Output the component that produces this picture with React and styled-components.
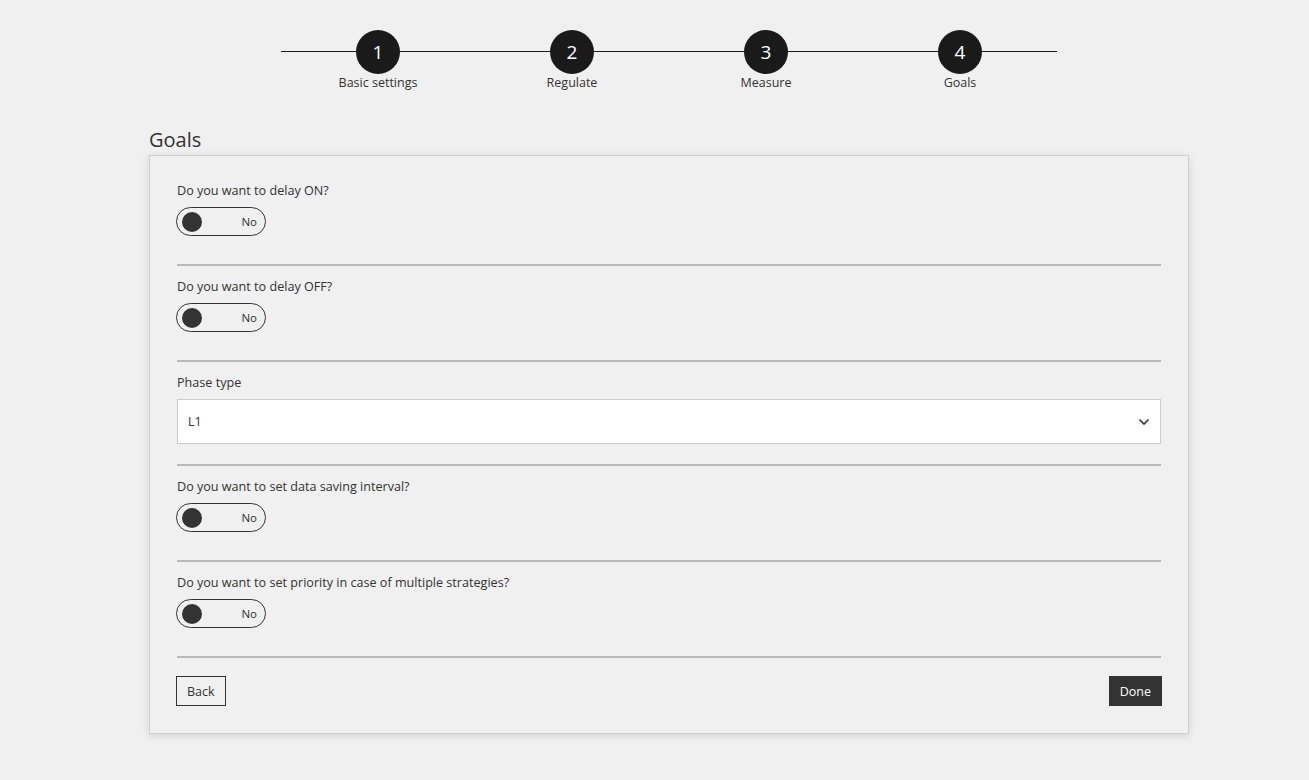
import React, { useState } from 'react';
import styled, { createGlobalStyle } from 'styled-components';

const GlobalStyle = createGlobalStyle`
  body {
    margin: 0;
    background: #f0f0f0;
    font-family: "Open Sans", "Noto Sans", sans-serif;
    color: #333;
  }
`;

const steps = ['Basic settings', 'Regulate', 'Measure', 'Goals'];

const questions = [
  { id: 'delayOn', label: 'Do you want to delay ON?' },
  { id: 'delayOff', label: 'Do you want to delay OFF?' },
  { id: 'phase', label: 'Phase type', select: true },
  { id: 'saving', label: 'Do you want to set data saving interval?' },
  { id: 'priority', label: 'Do you want to set priority in case of multiple strategies?' },
];

const Chevron = () => (
  <svg width="12" height="8" viewBox="0 0 12 8">
    <path d="M1.5 1.5 L6 6 L10.5 1.5" fill="none" stroke="#333" strokeWidth="1.6" />
  </svg>
);

const App = () => {
  const [values, setValues] = useState({});

  const flip = (id) => setValues((v) => ({ ...v, [id]: !v[id] }));

  return (
    <Page>
      <GlobalStyle />
      <Stepper>
        {steps.map((s, i) => (
          <Step key={s}>
            <Circle>{i + 1}</Circle>
            <StepLabel>{s}</StepLabel>
          </Step>
        ))}
      </Stepper>

      <Title>Goals</Title>
      <Card>
        {questions.map((q) => (
          <Section key={q.id} $select={q.select}>
            <Label>{q.label}</Label>
            {q.select ? (
              <Select>
                <span>L1</span>
                <Chevron />
              </Select>
            ) : (
              <Toggle onClick={() => flip(q.id)} $on={values[q.id]}>
                <Knob $on={values[q.id]} />
                <ToggleText>{values[q.id] ? 'Yes' : 'No'}</ToggleText>
              </Toggle>
            )}
          </Section>
        ))}
        <Footer>
          <BackButton>Back</BackButton>
          <DoneButton>Done</DoneButton>
        </Footer>
      </Card>
    </Page>
  );
};

const Page = styled.div`
  padding: 30px 0 40px;
  min-height: 100vh;
  box-sizing: border-box;
`;

const Stepper = styled.div`
  width: 776px;
  margin: 0 0 0 281px;
  display: grid;
  grid-template-columns: repeat(4, 1fr);
  position: relative;

  &::before {
    content: '';
    position: absolute;
    left: 0;
    right: 0;
    top: 21px;
    height: 1px;
    background: #1a1a1a;
  }
`;

const Step = styled.div`
  display: flex;
  flex-direction: column;
  align-items: center;
  position: relative;
`;

const Circle = styled.div`
  width: 44px;
  height: 44px;
  border-radius: 50%;
  background: #1a1a1a;
  color: #fff;
  font-size: 19px;
  display: flex;
  align-items: center;
  justify-content: center;
`;

const StepLabel = styled.div`
  font-size: 12.5px;
  line-height: 16px;
  margin-top: 1px;
  color: #333;
`;

const Title = styled.h2`
  margin: 35px 0 0 149px;
  font-size: 20px;
  font-weight: 400;
  line-height: 27px;
  color: #333;
`;

const Card = styled.div`
  margin: 2px 0 0 149px;
  width: 1040px;
  box-sizing: border-box;
  border: 1px solid #d0d0d0;
  box-shadow: 0 2px 8px rgba(0, 0, 0, 0.12);
  background: #f0f0f0;
  padding: 25px 27px 27px;
`;

const Section = styled.div`
  padding: ${(p) => (p.$select ? '11px 0 20px' : '11px 0 28px')};
  border-bottom: 2px solid #b8b8b8;

  &:first-child {
    padding-top: 0;
  }
`;

const Label = styled.div`
  font-size: 12.6px;
  line-height: 20px;
  margin-bottom: 6px;
  color: #333;
`;

const Toggle = styled.button`
  width: 90px;
  height: 29px;
  margin-left: -1px;
  border: 1px solid #333;
  border-radius: 15px;
  background: transparent;
  display: flex;
  align-items: center;
  justify-content: ${(p) => (p.$on ? 'flex-start' : 'space-between')};
  flex-direction: ${(p) => (p.$on ? 'row-reverse' : 'row')};
  padding: 0 8px 0 5px;
  box-sizing: border-box;
  cursor: pointer;
  font-family: inherit;
`;

const Knob = styled.span`
  width: 20px;
  height: 20px;
  border-radius: 50%;
  background: #333;
`;

const ToggleText = styled.span`
  font-size: 11.5px;
  color: #333;
`;

const Select = styled.div`
  height: 45px;
  box-sizing: border-box;
  background: #fff;
  border: 1px solid #ccc;
  display: flex;
  align-items: center;
  justify-content: space-between;
  padding: 0 10px 0 10px;
  font-size: 12.5px;
  color: #333;
`;

const Footer = styled.div`
  display: flex;
  justify-content: space-between;
  margin-top: 18px;
`;

const BackButton = styled.button`
  height: 30px;
  padding: 0 10px;
  margin-left: -1px;
  border: 1px solid #333;
  background: transparent;
  font-family: inherit;
  font-size: 12.5px;
  color: #333;
  cursor: pointer;
`;

const DoneButton = styled.button`
  height: 30px;
  padding: 0 11px;
  margin-right: -1px;
  border: none;
  background: #333;
  color: #fff;
  font-family: inherit;
  font-size: 12.5px;
  cursor: pointer;
`;

export default App;
